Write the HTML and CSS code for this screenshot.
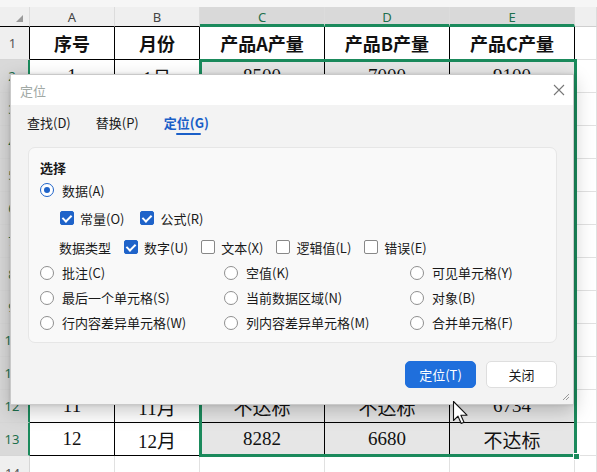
FILE: index.html
```html
<!doctype html>
<html lang="zh-CN">
<head>
  <meta charset="utf-8" />
  <title>定位</title>
  <link rel="stylesheet" href="styles.css">
</head>
<body>
<div class="sheet">
  <div class="hd corner"><span class="tri"></span></div>
  <div class="hd blk">A</div>
  <div class="hd blk">B</div>
  <div class="hd on">C</div>
  <div class="hd on">D</div>
  <div class="hd on">E</div>
  <div class="hd"></div>

  <div class="rh">1</div>
  <div class="c th">序号</div><div class="c th">月份</div><div class="c th">产品A产量</div><div class="c th">产品B产量</div><div class="c th">产品C产量</div><div class="e"></div>

  <div class="rh on">2</div>
  <div class="c">1</div><div class="c">1月</div><div class="c s">8500</div><div class="c s">7000</div><div class="c s">9100</div><div class="e"></div>
  <div class="rh on">3</div>
  <div class="c">2</div><div class="c">2月</div><div class="c s">7820</div><div class="c s">6950</div><div class="c s">8340</div><div class="e"></div>
  <div class="rh on">4</div>
  <div class="c">3</div><div class="c">3月</div><div class="c s">8130</div><div class="c s">不达标</div><div class="c s">7710</div><div class="e"></div>
  <div class="rh on">5</div>
  <div class="c">4</div><div class="c">4月</div><div class="c s">不达标</div><div class="c s">7260</div><div class="c s">8025</div><div class="e"></div>
  <div class="rh on">6</div>
  <div class="c">5</div><div class="c">5月</div><div class="c s">8640</div><div class="c s">7415</div><div class="c s">不达标</div><div class="e"></div>
  <div class="rh on">7</div>
  <div class="c">6</div><div class="c">6月</div><div class="c s">7905</div><div class="c s">6880</div><div class="c s">8590</div><div class="e"></div>
  <div class="rh on">8</div>
  <div class="c">7</div><div class="c">7月</div><div class="c s">8377</div><div class="c s">7102</div><div class="c s">7968</div><div class="e"></div>
  <div class="rh on">9</div>
  <div class="c">8</div><div class="c">8月</div><div class="c s">不达标</div><div class="c s">6930</div><div class="c s">8211</div><div class="e"></div>
  <div class="rh on">10</div>
  <div class="c">9</div><div class="c">9月</div><div class="c s">8056</div><div class="c s">7344</div><div class="c s">8470</div><div class="e"></div>
  <div class="rh on">11</div>
  <div class="c">10</div><div class="c">10月</div><div class="c s">8719</div><div class="c s">7088</div><div class="c s">不达标</div><div class="e"></div>
  <div class="rh on">12</div>
  <div class="c">11</div><div class="c">11月</div><div class="c s">不达标</div><div class="c s">不达标</div><div class="c s">6734</div><div class="e"></div>
  <div class="rh on">13</div>
  <div class="c">12</div><div class="c">12月</div><div class="c s">8282</div><div class="c s">6680</div><div class="c s">不达标</div><div class="e"></div>

  <div class="rh last">14</div>
  <div class="e"></div><div class="e"></div><div class="e"></div><div class="e"></div><div class="e"></div><div class="e"></div>

  <div class="sel"><span class="handle"></span></div>
</div>

<div class="dlg">
  <div class="dlgTitle">
    <span>定位</span>
    <svg class="close" width="12" height="12" viewBox="0 0 12 12"><path d="M1 1L11 11M11 1L1 11" stroke="#777" stroke-width="1.1"/></svg>
  </div>
  <div class="dlgBody">
    <div class="tabs">
      <div class="tab">查找(D)</div>
      <div class="tab">替换(P)</div>
      <div class="tab act">定位(G)</div>
    </div>

    <div class="panel">
      <div class="pTitle">选择</div>
      <div class="line">
        <span class="radio on"></span>数据(A)
      </div>
      <div class="line sub">
        <label class="opt"><span class="chk on"></span>常量(O)</label>
        <label class="opt"><span class="chk on"></span>公式(R)</label>
      </div>
      <div class="line types">
        <span class="lbl">数据类型</span>
        <label class="opt"><span class="chk on"></span>数字(U)</label>
        <label class="opt"><span class="chk"></span>文本(X)</label>
        <label class="opt"><span class="chk"></span>逻辑值(L)</label>
        <label class="opt"><span class="chk"></span>错误(E)</label>
      </div>
      <div class="radios">
        <div class="line"><span class="radio"></span>批注(C)</div>
        <div class="line"><span class="radio"></span>空值(K)</div>
        <div class="line"><span class="radio"></span>可见单元格(Y)</div>
        <div class="line"><span class="radio"></span>最后一个单元格(S)</div>
        <div class="line"><span class="radio"></span>当前数据区域(N)</div>
        <div class="line"><span class="radio"></span>对象(B)</div>
        <div class="line"><span class="radio"></span>行内容差异单元格(W)</div>
        <div class="line"><span class="radio"></span>列内容差异单元格(M)</div>
        <div class="line"><span class="radio"></span>合并单元格(F)</div>
      </div>
    </div>

    <div class="btns">
      <button class="primary">定位(T)</button>
      <button>关闭</button>
    </div>
  </div>
  <svg class="grip" width="9" height="9" viewBox="0 0 9 9"><path d="M8 2L2 8M8 5L5 8" stroke="#999" stroke-width="1"/></svg>
</div>

<svg class="cursor" width="18" height="26" viewBox="0 0 18 26">
  <path d="M1.5 1.5V20.5L6 16.2L9.2 23.5L12 22.3L8.9 15.2H15Z" fill="#fff" stroke="#111" stroke-width="1.1" stroke-linejoin="round"/>
</svg>
</body>
</html>
```

FILE: styles.css
```css
*{box-sizing:border-box}
body{
  margin:0;
  width:597px;
  height:472px;
  overflow:hidden;
  background:#fff;
  position:relative;
  font-family:"Noto Sans","Noto Sans CJK SC",sans-serif;
}

/* ===== sheet ===== */
.sheet{
  position:relative;
  display:grid;
  grid-template-columns:30px 85px 85px 125px 125px 125px 22px;
  grid-template-rows:20px repeat(14,33px);
  padding-top:7px;
  background:#f6f6f6;
}
.hd{
  background:#efefef;
  border-right:1px solid #dcdcdc;
  border-bottom:1px solid #cfcfcf;
  color:#444;
  font-size:13px;
  display:flex;
  align-items:center;
  justify-content:center;
}
.hd.blk{border-bottom-color:#000}
.hd.on{
  background:#d9d9d9;
  color:#1d6f4c;
  border-bottom:3px solid #1b8a5c;
  padding-top:2px;
}
.corner{position:relative;border-bottom-color:#000}
.tri{
  position:absolute;right:6px;bottom:4px;
  width:0;height:0;
  border-left:7px solid transparent;
  border-bottom:7px solid #9a9a9a;
}
.rh{
  background:#efefef;
  border-right:1px solid #000;
  border-bottom:1px solid #d6d6d6;
  color:#555;
  font-size:13px;
  display:flex;
  align-items:center;
  justify-content:center;
  padding-right:4px;
}
.rh.on{
  background:#d9d9d9;
  color:#1d6f4c;
  border-right:2px solid #1b8a5c;
}
.rh.last{border-right-color:#d6d6d6;align-items:flex-start;padding-top:8px}
.c{
  background:#fff;
  border-right:1px solid #000;
  border-bottom:1px solid #000;
  font-family:"Liberation Serif","Noto Sans CJK SC",serif;
  font-size:19px;
  color:#111;
  display:flex;
  align-items:center;
  justify-content:center;
}
.c.s{background:#e6e6e6}
.c.th{font-family:"Noto Sans CJK SC",serif;font-weight:700;font-size:18px}
.e{
  background:#fff;
  border-right:1px solid #e1e1e1;
  border-bottom:1px solid #e1e1e1;
}
.sel{
  position:absolute;
  left:199px;top:59px;
  width:378px;height:398px;
  border:3px solid #1b8a5c;
}
.handle{
  position:absolute;
  right:-6px;bottom:-6px;
  width:7px;height:7px;
  background:#1b8a5c;
  border:1px solid #fff;
}

/* ===== dialog ===== */
.dlg{
  position:absolute;
  left:10px;top:74px;
  width:564px;height:331px;
  background:#f3f3f3;
  border:1px solid #c9c9c9;
  box-shadow:0 6px 18px rgba(0,0,0,.22),0 0 3px rgba(0,0,0,.12);
  color:#1a1a1a;
  font-family:"Noto Sans CJK SC",sans-serif;
  font-size:13px;
}
.dlgTitle{
  height:30px;
  background:#fff;
  display:flex;
  align-items:center;
  justify-content:space-between;
  padding:0 7px 0 9px;
  color:#a0a8a4;
}
.close{margin-right:1px}
.tabs{
  display:flex;
  gap:25px;
  padding:8px 0 0 16px;
}
.tab{line-height:20px;padding-bottom:2px;position:relative}
.tab.act{color:#1a5fc8;font-weight:700}
.tab.act::after{
  content:"";
  position:absolute;
  left:12px;bottom:0;
  width:25px;height:2px;
  border-radius:1px;
  background:#1a5fc8;
}
.panel{
  margin:12px 16px 0 17px;
  height:196px;
  background:#f9f9f9;
  border:1px solid #e6e6e6;
  border-radius:7px;
  padding:10px 12px 0 11px;
}
.pTitle{font-weight:700;line-height:20px}
.line{display:flex;align-items:center;height:24px;gap:6px;white-space:nowrap}
.sub{height:32px;padding-left:20px;gap:16px}
.types{height:26px;padding-left:19px;gap:13px}
.opt{display:flex;align-items:center;gap:6px}
.radios{
  display:grid;
  grid-template-columns:184px 186px 1fr;
}
.radios .line{height:25px}

.radio{
  width:14px;height:14px;
  border:1px solid #8f8f8f;
  border-radius:50%;
  background:#fff;
  margin-right:2px;
  flex:none;
  position:relative;
}
.radio.on{border-color:#1f63c9}
.radio.on::after{
  content:"";
  position:absolute;
  left:3px;top:3px;
  width:6px;height:6px;
  border-radius:50%;
  background:#1f63c9;
}
.chk{
  width:14px;height:14px;
  border:1px solid #888;
  border-radius:2px;
  background:#fff;
  flex:none;
  position:relative;
}
.chk.on{background:#1f63c9;border-color:#1f63c9}
.chk.on::after{
  content:"";
  position:absolute;
  left:3px;top:1px;
  width:4px;height:7px;
  border:solid #fff;
  border-width:0 2px 2px 0;
  transform:rotate(45deg);
}

.btns{
  display:flex;
  justify-content:flex-end;
  gap:10px;
  padding:18px 16px 0;
}
button{
  width:71px;height:27px;
  border:1px solid #dedede;
  border-radius:5px;
  background:#fff;
  color:#1a1a1a;
  font:13px "Noto Sans CJK SC",sans-serif;
  padding:0;
}
button.primary{background:#1f6fdc;border-color:#1f6fdc;color:#fff}

.grip{position:absolute;right:3px;bottom:3px}
.cursor{position:absolute;left:452px;top:400px}
```
